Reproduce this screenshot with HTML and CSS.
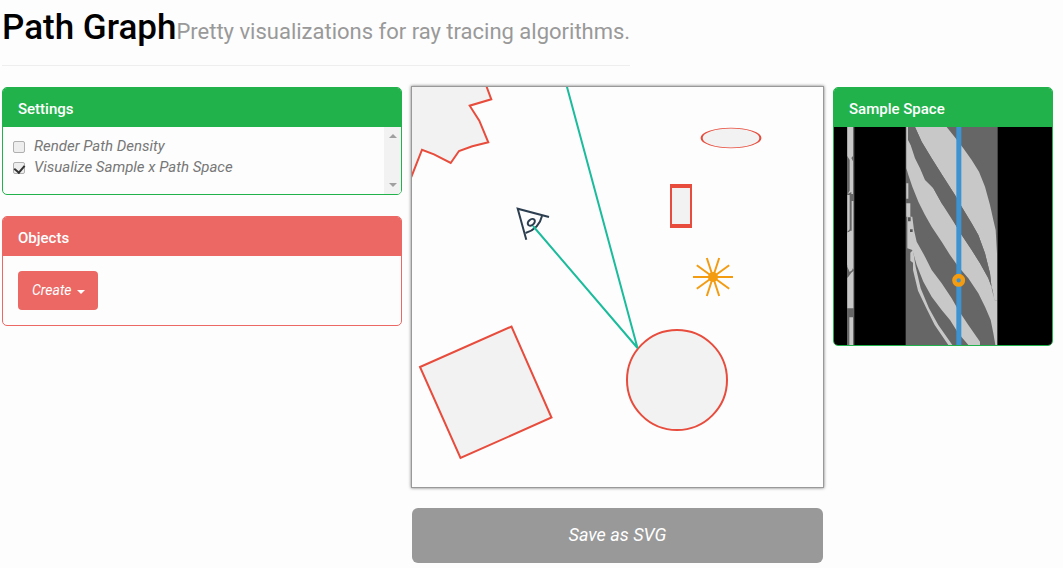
FILE: index.html
```html
<!DOCTYPE html>
<html lang="en">
<head>
<meta charset="utf-8">
<title>Path Graph</title>
<link rel="stylesheet" href="styles.css">
</head>
<body>
<header class="page-header">
  <h1 class="title">Path Graph</h1>
  <p class="subtitle">Pretty visualizations for ray tracing algorithms.</p>
</header>
<main class="layout">
  <div class="sidebar">
    <section class="panel panel-green">
      <h2 class="panel-heading">Settings</h2>
      <div class="settings">
        <div class="options">
          <label class="option"><input class="check" type="checkbox">Render Path Density</label>
          <label class="option"><input class="check" type="checkbox" checked>Visualize Sample x Path Space</label>
        </div>
        <div class="scroll-track" aria-hidden="true">
          <span class="arrow arrow-up"></span>
          <span class="arrow arrow-down"></span>
        </div>
      </div>
    </section>
    <section class="panel panel-red">
      <h2 class="panel-heading">Objects</h2>
      <div class="objects">
        <button class="create" type="button">Create<span class="caret"></span></button>
      </div>
    </section>
  </div>
  <div class="stage">
    <svg class="scene" viewBox="412 87 411 400" role="img" aria-label="Scene">
      <g fill="#f2f2f2" stroke="#e74c3c" stroke-width="2">
        <path d="M400 70H481L486.7 87L491.3 99.3L469.7 105.7L479.3 120.7L488.3 142.3L472.3 146.3L459 151L450.7 163L434 154.3L422 149.7L411.7 176L400 200Z"/>
        <path d="M420 367L511.5 326.5L551.5 417.5L460.5 458Z"/>
        <circle cx="677" cy="380" r="50"/>
        <circle r="9.8" stroke-width="0.7" transform="translate(731 138) scale(3 1)"/>
        <path stroke="none" fill="#e74c3c" d="M670 184H692V228H670Z"/>
        <path stroke="none" d="M672 188H690V224H672Z"/>
      </g>
      <g fill="none" stroke="#2c3e50" stroke-width="2">
        <path d="M549 217L517.7 208.7L526.3 239.7"/>
        <path d="M542 216Q539 229 525.5 233"/>
        <ellipse cx="531.3" cy="222.3" rx="4" ry="2.8" transform="rotate(-40 531.3 222.3)"/>
      </g>
      <path d="M533 226L637.5 348L567 87L562 68" fill="none" stroke="#1abc9c" stroke-width="2"/>
      <g transform="translate(713 277)" fill="#f39c12" stroke="#f39c12" stroke-width="2">
        <circle r="4"/>
        <path d="M-20 0H20M-16.2 -11.8L16.2 11.8M-6.2 -19L6.2 19M6.2 -19L-6.2 19M16.2 -11.8L-16.2 11.8"/>
      </g>
    </svg>
    <button class="save" type="button">Save as SVG</button>
  </div>
  <section class="panel panel-green samples">
    <h2 class="panel-heading">Sample Space</h2>
    <svg class="sample-map" viewBox="27 141 654 654" role="img" aria-label="Sample space">
      <path fill="#000" d="M27 141H681V795H27Z"/>
      <path fill="#666" d="M66 141H88V795H66ZM242 141H518V795H242Z"/>
      <g fill="#c8c8c8">
        <path d="M67 141H84V228L79 234L84 244V342H79V336L68 342L74 332V240L67 228Z"/>
        <path d="M67 345H74V448L67 456ZM80 363H85V568L80 564L74 560L67 555V460L76 452H80Z"/>
        <path d="M67 456H82V570L74 576L67 560ZM72 588L79 578L85 573V685H67V594ZM73 712H84V795H73Z"/>
        <path d="M270 141L290 185L320 235L355 290L390 345L410 380L440 430L460 465L480 520L495 580L500 625L509 662L516 662V520L512 450L505 420L495 375L480 320L462 275L440 240L415 205L392 175L365 141Z"/>
        <path d="M244 141H249V180L257 195L270 235L285 265L300 300L325 325L350 370L375 402L395 440L410 465L440 510L465 550L490 595L503 630L510 662H516V795H511L505 760L497 720L480 680L460 640L430 595L400 560L375 525L350 485L320 440L300 405L280 365L262 320L250 285L244 265Z"/>
        <path d="M244 310H250V356H244ZM244 370H256V410H262L267 450L275 485L300 530L320 570L350 610L380 655L400 690L430 735L465 785V795H430L400 760L375 720L350 690L320 650L295 605L275 555L262 510L247 505V410H244Z"/>
        <path d="M256 518L264 510L272 560L287 625L312 685L340 735L382 795H370L329 735L304 685L279 632L264 570V548L256 542Z"/>
      </g>
      <path fill="#666" d="M249 141H270L290 185L320 235L355 290L390 345L410 380L440 430L460 465L480 520L495 580L500 625L507 655L503 630L490 595L465 550L440 510L410 465L395 440L350 370L325 325L300 290L270 225L252 180Z"/>
      <path fill="#555" d="M249 412H257V424H249ZM255 448H263V456H255Z"/>
      <path fill="#3d93d1" d="M394 141H409V795H394Z"/>
      <circle cx="401" cy="601" r="13" fill="#3d93d1" stroke="#f39c12" stroke-width="13"/>
    </svg>
  </section>
</main>
</body>
</html>
```
FILE: styles.css
```css
* { box-sizing: border-box; }

body {
  margin: 0;
  padding: 0 10px 5px 2px;
  background: #fdfdfd;
  color: #777;
  font: 16px/22px Roboto, sans-serif;
}

.page-header {
  display: inline-flex;
  align-items: baseline;
  height: 66px;
  border-bottom: 1px solid #eee;
}

.title {
  margin: 0;
  color: #000;
  font-size: 35px;
  font-weight: 500;
  line-height: 56px;
}

.subtitle {
  margin: 0;
  color: #999;
  font-size: 22px;
  font-weight: 400;
  line-height: 56px;
}

.layout {
  display: grid;
  grid-template-columns: 400fr 413fr 220fr;
  column-gap: 9px;
  align-items: start;
  padding-top: 20px;
}

.sidebar,
.stage {
  display: flex;
  flex-direction: column;
  gap: 20px;
}

.sidebar { gap: 21px; }

.panel {
  overflow: hidden;
  border: 1px solid;
  border-radius: 5px;
}

.sidebar,
.samples { margin-top: 1px; }

.panel-green {
  border-color: #22b24c;
  --accent: #22b24c;
}

.panel-red {
  border-color: #eb6864;
  --accent: #eb6864;
}

.panel-heading {
  margin: 0;
  padding: 10px 15px 7px;
  background: var(--accent);
  color: #fff;
  font-size: 15px;
  font-weight: 500;
  line-height: 22px;
}

.settings {
  display: flex;
  justify-content: space-between;
}

.options {
  display: flex;
  flex-direction: column;
  padding: 9px 10px 16px;
}

.option {
  display: flex;
  align-items: center;
  gap: 9px;
  font: italic 15px/21px Roboto, sans-serif;
}

.check {
  appearance: none;
  display: grid;
  place-items: center;
  width: 12px;
  height: 12px;
  margin: 0;
  border: 1px solid #b0b0b0;
  border-radius: 2px;
  background: #eee;
}

.check:checked::after {
  content: "";
  width: 5px;
  height: 8px;
  border: solid #333;
  border-width: 0 2px 2px 0;
  transform: rotate(40deg);
}

.scroll-track {
  display: flex;
  flex-direction: column;
  justify-content: space-between;
  align-items: center;
  width: 17px;
  padding: 7px 0;
  background: #f2f2f2;
}

.arrow {
  border: 4px solid transparent;
}

.arrow-up {
  border-top: 0;
  border-bottom-color: #a0a0a0;
}

.arrow-down {
  border-bottom: 0;
  border-top-color: #a0a0a0;
}

.objects { padding: 15px; }

.create {
  display: flex;
  align-items: center;
  gap: 5px;
  padding: 8px 13px 9px 14px;
  border: 0;
  border-radius: 4px;
  background: #eb6864;
  color: #fff;
  font: italic 14px/22px Roboto, sans-serif;
}

.caret {
  margin-top: 3px;
  border: 4px solid transparent;
  border-top-color: #fff;
  border-bottom: 0;
}

.scene {
  display: block;
  width: 100%;
  border: 1px solid #999;
  box-shadow: 0 0 3px #777;
}

.save {
  margin: 0 1px;
  padding: 14px 16px 15px;
  border: 0;
  border-radius: 6px;
  background: #999;
  color: #fff;
  font: italic 18px/26px Roboto, sans-serif;
}

.sample-map {
  display: block;
  width: 100%;
}
```
